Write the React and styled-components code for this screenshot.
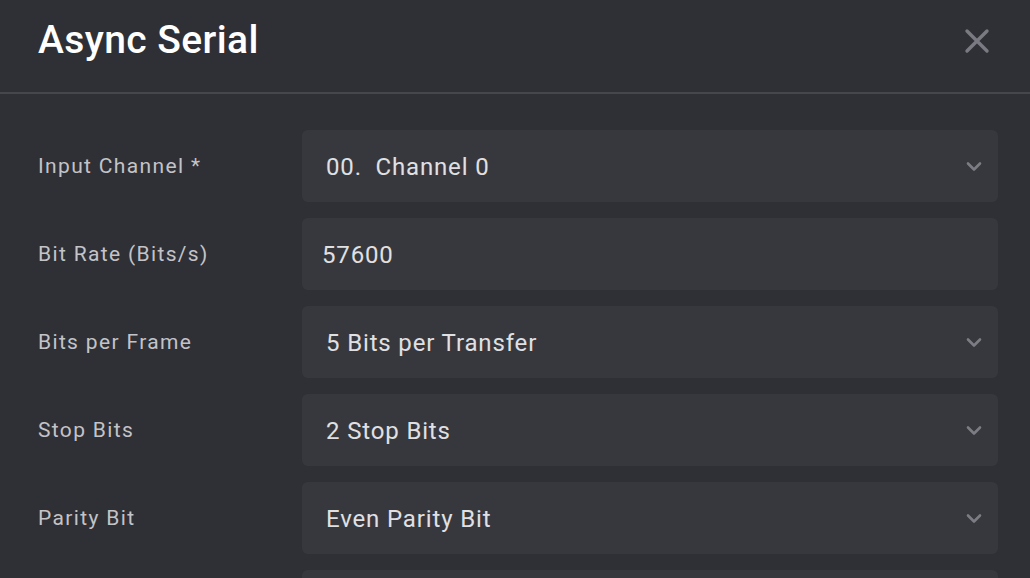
import React from 'react';
import styled, { createGlobalStyle } from 'styled-components';

const GlobalStyle = createGlobalStyle`
  html, body {
    margin: 0;
    padding: 0;
    background: #2f3035;
  }
  body {
    font-family: Roboto, 'Noto Sans', sans-serif;
  }
`;

const fields = [
  { label: 'Input Channel *', value: '00.  Channel 0', type: 'select' },
  { label: 'Bit Rate (Bits/s)', value: '57600', type: 'input' },
  { label: 'Bits per Frame', value: '5 Bits per Transfer', type: 'select' },
  { label: 'Stop Bits', value: '2 Stop Bits', type: 'select' },
  { label: 'Parity Bit', value: 'Even Parity Bit', type: 'select' },
  { label: 'Significant Bit', value: 'Least Significant Bit First', type: 'select' },
];

const Chevron = () => (
  <svg width='16' height='11' viewBox='0 0 16 11' fill='none'>
    <path d='M2 2.5 L8 8.5 L14 2.5' stroke='#7c7d84' strokeWidth='2.6' strokeLinecap='round' strokeLinejoin='round' />
  </svg>
);

const CloseIcon = () => (
  <svg width='26' height='26' viewBox='0 0 26 26' fill='none'>
    <path d='M3 3 L23 23 M23 3 L3 23' stroke='#7a7b82' strokeWidth='3.4' strokeLinecap='round' />
  </svg>
);

const App = () => {
  return (
    <Dialog>
      <GlobalStyle />
      <Header>
        <Title>Async Serial</Title>
        <CloseButton aria-label='close'>
          <CloseIcon />
        </CloseButton>
      </Header>
      <Body>
        {fields.map((f) => (
          <Row key={f.label}>
            <Label>{f.label}</Label>
            <Field $input={f.type === 'input'}>
              <Value>{f.value}</Value>
              {f.type === 'select' && <Chevron />}
            </Field>
          </Row>
        ))}
      </Body>
    </Dialog>
  );
};

const Dialog = styled.div`
  width: 1030px;
  height: 578px;
  overflow: hidden;
  background: #2f3035;
  color: #e2e2e4;
`;

const Header = styled.header`
  height: 92px;
  display: flex;
  align-items: center;
  justify-content: space-between;
  padding: 0 38px;
  border-bottom: 2px solid #46474c;
  box-sizing: content-box;
  width: calc(1030px - 76px);
`;

const Title = styled.h1`
  margin: 0;
  margin-top: -12px;
  font-size: 39px;
  font-weight: 500;
  color: #ffffff;
  letter-spacing: 0.4px;
`;

const CloseButton = styled.button`
  border: none;
  background: none;
  padding: 0;
  margin-right: 2px;
  margin-top: -11px;
  display: flex;
  cursor: pointer;
`;

const Body = styled.div`
  padding: 36px 32px 0 38px;
  display: flex;
  flex-direction: column;
  gap: 16px;
`;

const Row = styled.div`
  display: grid;
  grid-template-columns: 264px 1fr;
  align-items: center;
`;

const Label = styled.div`
  font-size: 21px;
  letter-spacing: 1.35px;
  color: #c3c3c8;
  margin-top: -1px;
  white-space: nowrap;
`;

const Field = styled.div`
  height: 72px;
  border-radius: 6px;
  background: #37383d;
  display: flex;
  align-items: center;
  justify-content: space-between;
  padding: 0 16px 0 ${(p) => (p.$input ? '20px' : '24px')};
`;

const Value = styled.span`
  font-size: 24px;
  letter-spacing: 0.85px;
  color: #e0e0e3;
  white-space: pre;
  margin-top: 2px;
`;

export default App;
